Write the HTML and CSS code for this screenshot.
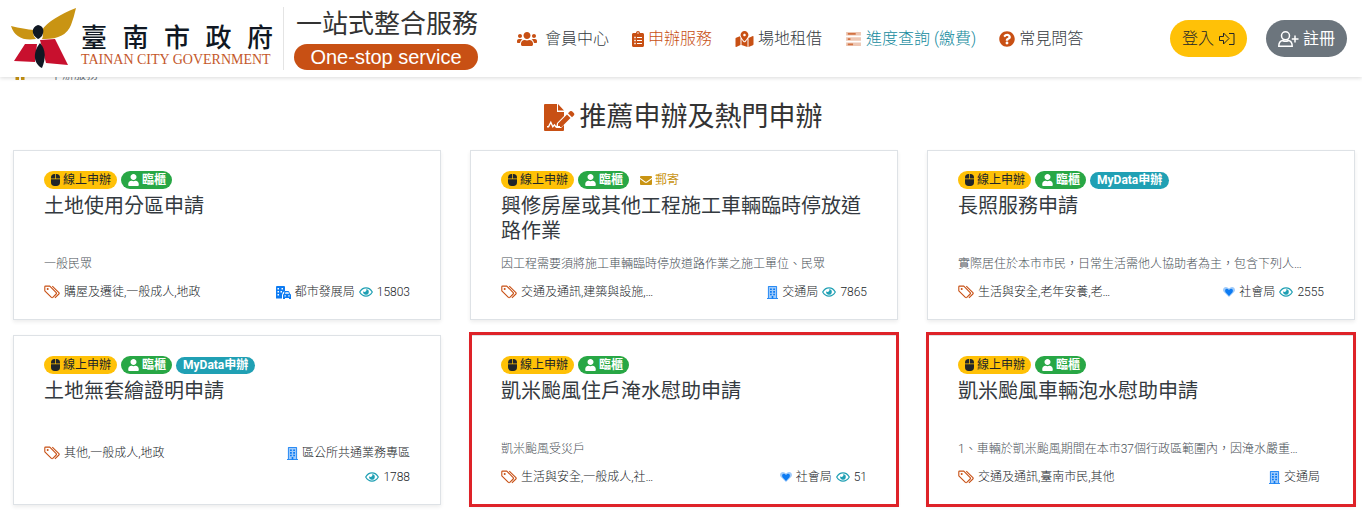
FILE: index.html
```html
<!DOCTYPE html>
<html lang="zh-Hant">
<head>
<meta charset="utf-8">
<meta name="viewport" content="width=device-width, initial-scale=1">
<title>臺南市政府 一站式整合服務</title>
<link rel="stylesheet" href="styles.css">
</head>
<body>
<svg class="sprite" aria-hidden="true">
  <symbol id="users" viewBox="0 0 640 512"><path d="M96 224c35.3 0 64-28.7 64-64s-28.7-64-64-64-64 28.7-64 64 28.7 64 64 64zm448 0c35.3 0 64-28.7 64-64s-28.7-64-64-64-64 28.7-64 64 28.7 64 64 64zm32 32h-64c-17.6 0-33.5 7.1-45.1 18.6 40.3 22.1 68.9 62 75.1 109.4h66c17.7 0 32-14.3 32-32v-32c0-35.3-28.7-64-64-64zm-256 0c61.9 0 112-50.1 112-112S381.9 32 320 32 208 82.1 208 144s50.1 112 112 112zm76.800 32h-8.300c-20.800 10-43.900 16-68.500 16s-47.600-6-68.500-16h-8.300C179.600 288 128 339.600 128 403.200V432c0 26.500 21.500 48 48 48h288c26.500 0 48-21.500 48-48v-28.800c0-63.600-51.600-115.200-115.200-115.200zm-223.700-13.400C161.500 263.100 145.600 256 128 256H64c-35.300 0-64 28.700-64 64v32c0 17.700 14.300 32 32 32h65.900c6.300-47.400 34.900-87.300 75.200-109.400z"/></symbol>
  <symbol id="clipboard" viewBox="0 0 384 512"><path fill-rule="evenodd" d="M336 64h-80c0-35.300-28.700-64-64-64s-64 28.700-64 64H48C21.500 64 0 85.500 0 112v352c0 26.500 21.500 48 48 48h288c26.500 0 48-21.500 48-48V112c0-26.500-21.500-48-48-48zM192 40a24 24 0 1 1 0 48 24 24 0 0 1 0-48zM72 184h48v48H72zM160 192h160v32H160zM72 280h48v48H72zM160 288h160v32H160zM72 376h48v48H72zM160 384h160v32H160z"/></symbol>
  <symbol id="map" viewBox="0 0 576 512"><path d="M288 0c-69.600 0-126 56.400-126 126 0 56.300 82.300 158.800 113.900 196 6.400 7.500 17.800 7.500 24.200 0C331.700 284.800 414 182.300 414 126 414 56.400 357.600 0 288 0zm0 168c-23.200 0-42-18.800-42-42s18.800-42 42-42 42 18.800 42 42-18.800 42-42 42zM20.100 216A32 32 0 0 0 0 245.700V496c0 11.300 11.400 19 21.900 14.900L160 448V214.900c-8.800-16-16-31.500-21.200-46.400L20.100 216zM288 359.700c-14 0-27.400-6.200-36.500-17-19.700-23.200-40.600-49.600-59.500-76.700v182l192 64V266c-18.900 27-39.800 53.500-59.500 76.700-9.100 10.800-22.400 17-36.500 17zm266-198.500L416 224v288l139.900-56a32 32 0 0 0 20.100-29.700V176c0-11.300-11.400-19-22-14.800z"/></symbol>
  <symbol id="bars" viewBox="0 0 17 16"><g opacity=".4"><path d="M0 0h17v4H0zM0 6h17v4H0zM0 12h17v4H0z"/></g><path d="M2 1h9v2H2zM2 7h3v2H2zM2 13h6v2H2z"/></symbol>
  <symbol id="question" viewBox="0 0 512 512"><path d="M504 256c0 137-111 248-248 248S8 393 8 256C8 119 119 8 256 8s248 111 248 248zM262.700 90c-54.500 0-89.300 23-116.600 63.800-3.500 5.300-2.400 12.400 2.700 16.200l34.700 26.300c5.200 4 12.600 3 16.700-2.100 17.800-22.700 30-35.800 57.300-35.800 20.400 0 45.700 13.100 45.700 33 0 15-12.400 22.600-32.600 34C247.100 238.500 216 255 216 296v4c0 6.600 5.400 12 12 12h56c6.600 0 12-5.400 12-12v-1.300c0-28.500 83.200-29.700 83.200-106.700 0-58-60.200-102-116.500-102zM256 338c-25.400 0-46 20.600-46 46s20.600 46 46 46 46-20.600 46-46-20.600-46-46-46z"/></symbol>
  <symbol id="login" viewBox="0 0 17 14"><path fill="none" stroke="currentColor" stroke-linejoin="round" d="M1.500 4.500v4h4v3.500l5.500-5.500L5.500 1v3.500zM11 1.500h5v11h-5"/></symbol>
  <symbol id="register" viewBox="0 0 21 16"><g fill="none" stroke="currentColor" stroke-width="1.500"><circle cx="7.500" cy="4.800" r="4"/><path d="M4.500 9.500C2 10 .8 11.500.8 15.200h13.400c0-3.700-1.200-5.200-3.700-5.700-2 1-4 1-6 0zM17 4.500v7M13.800 8h6.700"/></g></symbol>
  <symbol id="signature" viewBox="0 0 31 27"><path d="M1 0h12v8h7v4l-7 7-1 5h5l3-3v5a1 1 0 0 1-1 1H1a1 1 0 0 1-1-1V1a1 1 0 0 1 1-1zM14 0l6 6.500h-6zM14 19.500l9-9 3.500 3.500-9 9H14zM24 9.300l2-2q1-.8 2 0l2 2q.8 1 0 2l-2 2z"/><path fill="none" stroke="#fff" stroke-width="1.400" d="M3 22.800h1.500l2.300-4.500 2 4.500 1.700-2 1.300 2H16"/></symbol>
  <symbol id="mouse" viewBox="0 0 384 512"><path d="M0 352a160 160 0 0 0 160 160h64a160 160 0 0 0 160-160V224H0zM176 0h-16A160 160 0 0 0 0 160v32h176zm48 0h-16v192h176v-32A160 160 0 0 0 224 0z"/></symbol>
  <symbol id="user" viewBox="0 0 448 512"><path d="M224 256c70.700 0 128-57.300 128-128S294.700 0 224 0 96 57.300 96 128s57.300 128 128 128zm89.600 32h-16.700c-22.200 10.200-46.900 16-72.900 16s-50.600-5.800-72.900-16h-16.700C60.200 288 0 348.200 0 422.400V464c0 26.500 21.500 48 48 48h352c26.500 0 48-21.500 48-48v-41.600c0-74.200-60.200-134.400-134.400-134.400z"/></symbol>
  <symbol id="mail" viewBox="0 0 12 9"><path d="M1 0h10q1 0 1 1v.8L6.800 5.600q-.8.5-1.600 0L0 1.800V1q0-1 1-1zM0 3l4.800 3.500q1.200.7 2.400 0L12 3v5q0 1-1 1H1q-1 0-1-1z"/></symbol>
  <symbol id="tags" viewBox="0 0 16 14"><path fill="none" stroke="currentColor" stroke-width="1.100" stroke-linejoin="round" d="M.8 1.800v4L7.400 12.400q.7.600 1.400 0l3.400-3.400q.6-.7 0-1.400L5.800 1.100H1.500q-.7 0-.7.700zM8.300 1.100l6.600 6.500q.6.700 0 1.400l-4 3.900"/><circle cx="3.700" cy="4" r="1"/></symbol>
  <symbol id="eye" viewBox="0 0 14 10"><path fill="none" stroke="currentColor" stroke-width="1.200" d="M.7 5Q3 .9 7 .9T13.300 5Q11 9.100 7 9.100T.7 5z"/><path d="M7 2.200A2.800 2.800 0 1 1 4.300 4.300 1.500 1.500 0 0 0 7 2.200z"/></symbol>
  <symbol id="building" viewBox="0 0 11 13"><path opacity=".4" d="M1 0h9v12h1v1H0v-1h1z"/><path fill="none" stroke="currentColor" stroke-width=".8" d="M1.400 12V.5h8.200V12M0 12.500h11"/><path d="M3 2.500h1.800v1.600H3zM6.200 2.500H8v1.600H6.200zM3 5.100h1.800v1.600H3zM6.200 5.100H8v1.600H6.200zM3 7.700h1.800v1.500H3zM6.200 7.700H8v1.500H6.200zM4.700 10h1.600v2.500H4.700z"/></symbol>
  <symbol id="citycar" viewBox="0 0 15 13"><path fill-rule="evenodd" d="M1 0h7q1 0 1 1v4L7 6.200 6 9v3.500H0V1q0-1 1-1zM1.500 2v1.500H3V2zM5.500 2v1.500H7V2zM1.500 5v1.500H3V5zM1.500 8v1.500H3V8zM4.500 5v1.500H6V5zM9 5h3q1 0 1.300 1l.7 1.800q1 .3 1 1.200v4h-2v-1H9v1H7V9q0-.9 1-1.200L8.300 6q.2-1 .7-1zM9.500 6.200 9 7.800h4l-.5-1.600zM8.500 9.300v1.200h1.300V9.300zM12.300 9.300v1.200h1.300V9.300z"/></symbol>
  <symbol id="heart" viewBox="0 0 12 10"><path opacity=".4" d="M6 10 .7 4.800Q-.6 3 .7 1.100 2.300-.5 4.500.4L6 1.600 7.500.4Q9.700-.5 11.300 1.100q1.300 1.900 0 3.700z"/><path d="M6 9 2.500 5.300Q1.600 3.700 2.500 2.300 4 1 6 3q2-2 3.500-.7.900 1.400 0 3z"/></symbol>
  <symbol id="home" viewBox="0 0 12 11"><path d="M6 0 0 5.500h1.500V11H5V7.500h2V11h3.500V5.500H12z"/></symbol>
</svg>

<header class="topbar">
  <a class="brand" href="#">
    <svg class="brand-mark" viewBox="0 0 66 62" aria-hidden="true">
      <path fill="#c99413" d="M65 0C50 6 36 14 31 22q2 4 0 9 23 1 29-14 3-8 5-17zM0 18q13 3 23 4-2 5 2 9Q5 34 0 18z"/>
      <path fill="#c8102e" d="M14 36h12l-2 18-21-1zM29 32l15-1 13 26-22-2z"/>
      <path fill="#101823" d="M27 17c5 1 7 5 4 11q-3 3-4 3c-7-4-7-12 0-14zM29 35c6 6 6 16 2 25-8-4-10-15-2-25z"/>
    </svg>
    <span class="brand-name">
      <span class="brand-zh"><span>臺</span><span>南</span><span>市</span><span>政</span><span>府</span></span>
      <span class="brand-en">TAINAN CITY GOVERNMENT</span>
    </span>
    <span class="brand-service">
      <span class="service-zh">一站式整合服務</span>
      <span class="service-en">One-stop service</span>
    </span>
  </a>
  <nav class="menu" aria-label="主選單">
    <a class="menu-link menu-wide" href="#"><svg class="i-users"><use href="#users"/></svg>會員中心</a>
    <a class="menu-link menu-active" href="#"><svg class="i-clipboard"><use href="#clipboard"/></svg>申辦服務</a>
    <a class="menu-link" href="#"><svg class="i-map"><use href="#map"/></svg>場地租借</a>
    <a class="menu-link menu-teal" href="#"><svg class="i-bars"><use href="#bars"/></svg>進度查詢 (繳費)</a>
    <a class="menu-link" href="#"><svg class="i-question"><use href="#question"/></svg>常見問答</a>
  </nav>
  <div class="account">
    <button class="btn btn-login" type="button">登入<svg class="i-login"><use href="#login"/></svg></button>
    <button class="btn btn-register" type="button"><svg class="i-register"><use href="#register"/></svg>註冊</button>
  </div>
</header>

<main>
  <nav class="crumbs" aria-label="導覽路徑">
    <a href="#" aria-label="首頁"><svg class="i-home"><use href="#home"/></svg></a>
    <span>申辦服務</span>
  </nav>
  <h1 class="heading"><svg class="i-signature"><use href="#signature"/></svg>推薦申辦及熱門申辦</h1>

  <div class="cards">
    <article class="card">
      <div class="badges">
        <span class="badge online"><svg class="i-mouse"><use href="#mouse"/></svg>線上申辦</span>
        <span class="badge counter"><svg class="i-user"><use href="#user"/></svg>臨櫃</span>
      </div>
      <h2 class="title">土地使用分區申請</h2>
      <p class="desc">一般民眾</p>
      <div class="meta">
        <span class="tags"><svg class="i-tags"><use href="#tags"/></svg>購屋及遷徒,一般成人,地政</span>
        <span class="stats">
          <span class="stat"><svg class="i-citycar"><use href="#citycar"/></svg>都市發展局</span>
          <span class="stat"><svg class="i-eye"><use href="#eye"/></svg>15803</span>
        </span>
      </div>
    </article>

    <article class="card">
      <div class="badges">
        <span class="badge online"><svg class="i-mouse"><use href="#mouse"/></svg>線上申辦</span>
        <span class="badge counter"><svg class="i-user"><use href="#user"/></svg>臨櫃</span>
        <span class="badge post"><svg class="i-mail"><use href="#mail"/></svg>郵寄</span>
      </div>
      <h2 class="title">興修房屋或其他工程施工車輛臨時停放道路作業</h2>
      <p class="desc">因工程需要須將施工車輛臨時停放道路作業之施工單位、民眾</p>
      <div class="meta">
        <span class="tags"><svg class="i-tags"><use href="#tags"/></svg>交通及通訊,建築與設施,…</span>
        <span class="stats">
          <span class="stat"><svg class="i-building"><use href="#building"/></svg>交通局</span>
          <span class="stat"><svg class="i-eye"><use href="#eye"/></svg>7865</span>
        </span>
      </div>
    </article>

    <article class="card">
      <div class="badges">
        <span class="badge online"><svg class="i-mouse"><use href="#mouse"/></svg>線上申辦</span>
        <span class="badge counter"><svg class="i-user"><use href="#user"/></svg>臨櫃</span>
        <span class="badge mydata">MyData申辦</span>
      </div>
      <h2 class="title">長照服務申請</h2>
      <p class="desc">實際居住於本市市民，日常生活需他人協助者為主，包含下列人…</p>
      <div class="meta">
        <span class="tags"><svg class="i-tags"><use href="#tags"/></svg>生活與安全,老年安養,老…</span>
        <span class="stats">
          <span class="stat"><svg class="i-heart"><use href="#heart"/></svg>社會局</span>
          <span class="stat"><svg class="i-eye"><use href="#eye"/></svg>2555</span>
        </span>
      </div>
    </article>

    <article class="card">
      <div class="badges">
        <span class="badge online"><svg class="i-mouse"><use href="#mouse"/></svg>線上申辦</span>
        <span class="badge counter"><svg class="i-user"><use href="#user"/></svg>臨櫃</span>
        <span class="badge mydata">MyData申辦</span>
      </div>
      <h2 class="title">土地無套繪證明申請</h2>
      <div class="meta">
        <span class="tags"><svg class="i-tags"><use href="#tags"/></svg>其他,一般成人,地政</span>
        <span class="stats">
          <span class="stat"><svg class="i-building"><use href="#building"/></svg>區公所共通業務專區</span>
          <span class="stat"><svg class="i-eye"><use href="#eye"/></svg>1788</span>
        </span>
      </div>
    </article>

    <article class="card marked">
      <div class="badges">
        <span class="badge online"><svg class="i-mouse"><use href="#mouse"/></svg>線上申辦</span>
        <span class="badge counter"><svg class="i-user"><use href="#user"/></svg>臨櫃</span>
      </div>
      <h2 class="title">凱米颱風住戶淹水慰助申請</h2>
      <p class="desc">凱米颱風受災戶</p>
      <div class="meta">
        <span class="tags"><svg class="i-tags"><use href="#tags"/></svg>生活與安全,一般成人,社…</span>
        <span class="stats">
          <span class="stat"><svg class="i-heart"><use href="#heart"/></svg>社會局</span>
          <span class="stat"><svg class="i-eye"><use href="#eye"/></svg>51</span>
        </span>
      </div>
    </article>

    <article class="card marked">
      <div class="badges">
        <span class="badge online"><svg class="i-mouse"><use href="#mouse"/></svg>線上申辦</span>
        <span class="badge counter"><svg class="i-user"><use href="#user"/></svg>臨櫃</span>
      </div>
      <h2 class="title">凱米颱風車輛泡水慰助申請</h2>
      <p class="desc">1、車輛於凱米颱風期間在本市37個行政區範圍內，因淹水嚴重…</p>
      <div class="meta">
        <span class="tags"><svg class="i-tags"><use href="#tags"/></svg>交通及通訊,臺南市民,其他</span>
        <span class="stats stats-single">
          <span class="stat"><svg class="i-building"><use href="#building"/></svg>交通局</span>
        </span>
      </div>
    </article>
  </div>
</main>
</body>
</html>
```

FILE: styles.css
```css
* { box-sizing: border-box; }

body {
  margin: 0;
  background: #fff;
  color: #343a40;
  font-family: Roboto, "Noto Sans CJK TC", sans-serif;
  font-size: 12px;
  line-height: 24px;
}

a { color: inherit; text-decoration: none; }
svg { flex: none; fill: currentColor; }
.sprite { display: none; }

/* Top bar */
.topbar {
  position: relative;
  z-index: 2;
  display: flex;
  align-items: center;
  min-height: 77px;
  padding-right: 15px;
  background: #fff;
  box-shadow: 0 1px 4px rgba(0, 0, 0, .15);
}
.brand { display: flex; align-items: center; padding-left: 11px; }
.brand-mark { width: 66px; height: 62px; }
.brand-name {
  display: flex;
  flex-direction: column;
  width: 192px;
  margin: 11px 10px 0 4px;
}
.brand-zh {
  display: flex;
  justify-content: space-between;
  color: #101823;
  font-family: "Noto Sans CJK TC", sans-serif;
  font-size: 26px;
  font-weight: 500;
  line-height: 32px;
}
.brand-en {
  color: #c4572a;
  font-family: "Liberation Serif", serif;
  font-size: 14px;
  line-height: 16px;
  white-space: nowrap;
}
.brand-service {
  display: flex;
  flex-direction: column;
  gap: 3px;
  padding: 0 0 0 10px;
  border-left: 1px solid #e4e4e4;
}
.service-zh {
  color: #333;
  font-size: 26px;
  line-height: 34px;
  padding-left: 2px;
}
.service-en {
  border-radius: 14px;
  background: #c85014;
  color: #fff;
  font-family: "Liberation Sans", sans-serif;
  font-size: 20px;
  line-height: 26px;
  text-align: center;
}
.menu {
  display: flex;
  gap: 23px;
  margin-left: 39px;
  color: #343a40;
  font-size: 16px;
  font-weight: 300;
  white-space: nowrap;
}
.menu-link { display: flex; align-items: center; gap: 4px; }
.menu-wide { gap: 8px; }
.menu-link svg { color: #c85014; }
.menu-active { color: #c85014; }
.menu-teal { color: #138a9d; }
.account { display: flex; gap: 19px; margin-left: auto; }
.btn {
  display: flex;
  align-items: center;
  gap: 4px;
  padding: 6px 12px;
  border: 0;
  border-radius: 19px;
  font: inherit;
  font-size: 16px;
  line-height: 25px;
  white-space: nowrap;
}
.btn-login { background: #ffc107; color: #212529; font-weight: 300; }
.btn-register { background: #6c757d; color: #fff; }

/* Breadcrumb, partly scrolled under the bar */
.crumbs {
  display: flex;
  align-items: flex-start;
  gap: 24px;
  height: 24px;
  margin-top: -8px;
  padding-left: 14px;
  color: #6c757d;
  line-height: 12px;
}
.crumbs a { display: flex; color: #c99413; }

.heading {
  display: flex;
  align-items: center;
  justify-content: center;
  gap: 5px;
  margin: 4px 0 12px;
  padding-left: 4px;
  color: #333;
  font-size: 27px;
  font-weight: 400;
  line-height: 41px;
}
.heading svg { color: #c85014; }

/* Cards */
.cards {
  display: grid;
  grid-template-columns: repeat(3, 1fr);
  gap: 15px 29px;
  padding: 0 7px 12px 13px;
}
.card {
  position: relative;
  display: flex;
  flex-direction: column;
  min-width: 0;
  min-height: 170px;
  padding: 20px 30px 15px;
  border: 1px solid #dee2e6;
  background: #fff;
  box-shadow: 0 2px 4px rgba(0, 0, 0, .075);
}
.marked::after {
  content: "";
  position: absolute;
  inset: -4px -2px -3px;
  border: 3px solid #de2228;
  pointer-events: none;
}
.badges { display: flex; gap: 4px; align-items: center; }
.badge {
  display: flex;
  align-items: center;
  gap: 3px;
  padding: 0 6px 0 7px;
  border-radius: 9px;
  font-size: 12px;
  line-height: 18px;
}
.online { background: #ffc107; color: #212529; }
.counter { background: #28a745; color: #fff; font-weight: 700; }
.mydata { background: #20a0b4; color: #fff; font-weight: 700; line-height: 17px; padding: 0 7px; }
.post { color: #c99413; }
.title {
  min-height: 50px;
  margin: 5px 0 8px;
  font-size: 20px;
  font-weight: 400;
  line-height: 25px;
}
.desc {
  margin: 0;
  overflow: hidden;
  color: #495057;
  font-weight: 300;
  text-overflow: ellipsis;
  white-space: nowrap;
}
.meta {
  display: grid;
  grid-template-columns: 8fr 7fr;
  align-items: start;
  margin-top: auto;
  padding-top: 3px;
  color: #212529;
  font-weight: 300;
}
.tags, .stat { display: flex; align-items: center; gap: 4px; white-space: nowrap; }
.stats { display: flex; flex-wrap: wrap; justify-content: flex-end; column-gap: 4px; }
.stats-single { padding-right: 4px; }
.i-tags { color: #c85014; }
.i-eye { color: #20a0b4; }
.i-building, .i-citycar, .i-heart { color: #0d7bf2; }

/* Icon sizes */
.i-users { width: 20px; height: 16px; }
.i-clipboard { width: 12px; height: 16px; }
.i-map { width: 19px; height: 16px; }
.i-bars { width: 17px; height: 14px; opacity: .8; }
.i-question { width: 16px; height: 16px; }
.i-login { width: 17px; height: 14px; }
.i-register { width: 21px; height: 16px; }
.i-home { width: 12px; height: 11px; }
.i-signature { width: 31px; height: 27px; }
.i-mouse { width: 9px; height: 12px; }
.i-user { width: 11px; height: 12px; }
.i-mail { width: 12px; height: 9px; }
.i-tags { width: 16px; height: 14px; }
.i-eye { width: 14px; height: 10px; }
.i-building { width: 11px; height: 13px; }
.i-citycar { width: 15px; height: 13px; }
.i-heart { width: 12px; height: 10px; }
```
